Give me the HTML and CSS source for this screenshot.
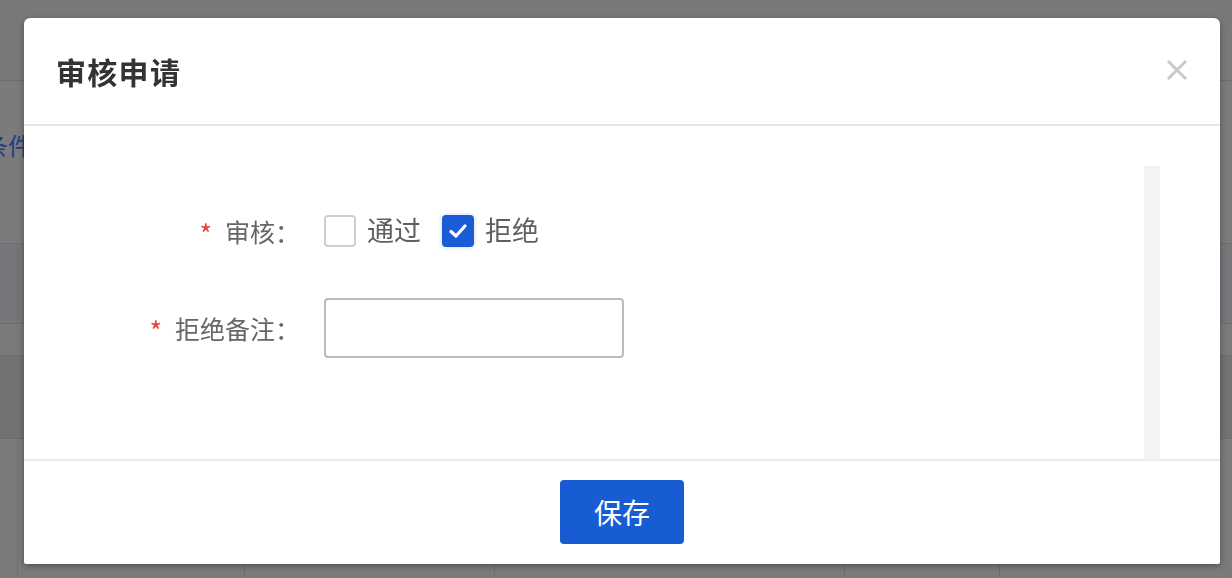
FILE: index.html
```html
<!DOCTYPE html>
<html lang="zh-CN">
<head>
<meta charset="utf-8">
<title>审核申请</title>
<link rel="stylesheet" href="styles.css">
</head>
<body>
<div class="page">
  <div class="topbar"></div>
  <div class="filter"><span class="filter-link">条件</span></div>
  <div class="table">
    <div class="trow r1"><div class="cell w18"></div><div class="cell"></div></div>
    <div class="trow r2"></div>
    <div class="trow r3"></div>
    <div class="trow r4">
      <div class="cell w18"></div>
      <div class="cell w227"></div>
      <div class="cell w250"></div>
      <div class="cell w350"></div>
      <div class="cell w155"></div>
      <div class="cell"></div>
    </div>
  </div>
</div>

<div class="dialog">
  <div class="dlg-header">
    <h2 class="dlg-title">审核申请</h2>
    <button class="dlg-close" aria-label="关闭">
      <svg width="22" height="22" viewBox="0 0 22 22"><path d="M2 2 L20 20 M20 2 L2 20" stroke="#c9c9c9" stroke-width="3" fill="none"/></svg>
    </button>
  </div>
  <div class="dlg-body">
    <div class="form">
      <div class="form-row row-audit">
        <label class="form-label"><span class="req">*</span>审核：</label>
        <div class="form-control">
          <label class="check"><span class="box"></span><span class="check-text">通过</span></label>
          <label class="check checked"><span class="box"><svg width="22" height="22" viewBox="0 0 22 22"><path d="M4 11.5 L9 16 L18 6" stroke="#fff" stroke-width="3.2" fill="none" stroke-linecap="round" stroke-linejoin="round"/></svg></span><span class="check-text">拒绝</span></label>
        </div>
      </div>
      <div class="form-row row-note">
        <label class="form-label"><span class="req">*</span>拒绝备注：</label>
        <div class="form-control">
          <input class="text-input" type="text">
        </div>
      </div>
    </div>
    <div class="scroll-track"></div>
  </div>
  <div class="dlg-footer">
    <button class="btn-primary">保存</button>
  </div>
</div>
</body>
</html>
```

FILE: styles.css
```css
* { box-sizing: border-box; }
html, body { margin: 0; padding: 0; }
body {
  width: 1232px;
  height: 578px;
  overflow: hidden;
  background: #7b7b7b;
  font-family: "Noto Sans CJK SC", "Noto Sans", sans-serif;
}

/* background page (dimmed) */
.page { width: 1232px; }
.topbar {
  height: 81px;
  background: #78797a;
  border-top: 18px solid #77787a;
  border-bottom: 1px solid #6d6d6e;
}
.filter {
  height: 162px;
  background: #7b7b7b;
  padding-top: 49px;
}
.filter-link {
  display: inline-block;
  margin-left: -16px;
  font-size: 24px;
  line-height: 30px;
  color: #1f3d88;
}
.trow {
  display: flex;
  border-top: 1px solid #6d6d6d;
}
.r1 { height: 80px; background: #76777a; }
.r2 { height: 32px; background: #7a7a7a; }
.r3 { height: 83px; background: #727272; }
.r4 { height: 140px; background: #7b7b7b; }
.cell { border-right: 1px solid #6e6e6e; flex: none; }
.cell:last-child { flex: 1; border-right: 0; }
.w18 { width: 18px; }
.w227 { width: 227px; }
.w250 { width: 250px; }
.w350 { width: 350px; }
.w155 { width: 155px; }

/* dialog */
.dialog {
  position: fixed;
  left: 24px;
  top: 18px;
  width: 1196px;
  height: 546px;
  background: #fff;
  border-radius: 6px 6px 2px 2px;
  box-shadow: 0 2px 6px rgba(0, 0, 0, 0.35);
  display: flex;
  flex-direction: column;
}
.dlg-header {
  height: 108px;
  flex: none;
  border-bottom: 2px solid #e6e6e6;
  display: flex;
  align-items: center;
  justify-content: space-between;
  padding: 0 32px 0 32px;
}
.dlg-title {
  margin: 0;
  font-size: 30px;
  font-weight: 700;
  letter-spacing: 1.3px;
  color: #333;
  line-height: 40px;
}
.dlg-close {
  border: 0;
  background: none;
  padding: 0;
  width: 22px;
  height: 22px;
  display: flex;
  margin-top: -2px;
}

.dlg-body {
  flex: 1;
  display: flex;
  padding-top: 40px;
  padding-right: 60px;
}
.form {
  flex: 1;
  padding-top: 35px;
}
.scroll-track {
  width: 16px;
  flex: none;
  background: #f3f3f3;
}
.form-row {
  display: flex;
  align-items: center;
  height: 60px;
}
.row-audit { margin-bottom: 37px; }
.form-label {
  width: 276px;
  flex: none;
  text-align: right;
  font-size: 25px;
  line-height: 32px;
  color: #666;
  margin-right: 24px;
  display: flex;
  justify-content: flex-end;
  align-items: center;
}
.req {
  color: #e8403a;
  margin-right: 13px;
  font-size: 27px;
  line-height: 32px;
  padding-top: 6px;
}
.form-control {
  display: flex;
  align-items: center;
}
.check {
  display: flex;
  align-items: center;
  margin-right: 21px;
  font-size: 27px;
  color: #5f5f5f;
}
.box {
  width: 32px;
  height: 32px;
  border: 2px solid #cfcfd2;
  border-radius: 4px;
  background: #fff;
  margin-right: 11px;
  display: flex;
  align-items: center;
  justify-content: center;
}
.checked .box {
  background: #1a5cd6;
  border-color: #1a5cd6;
  box-shadow: 0 0 5px rgba(26, 92, 214, 0.25);
}
.check-text { line-height: 32px; margin-top: -3px; }
.text-input {
  width: 300px;
  height: 60px;
  border: 2px solid #bcbcbc;
  border-radius: 4px;
  font-size: 24px;
  padding: 0 10px;
  outline: none;
}

.dlg-footer {
  height: 105px;
  flex: none;
  border-top: 2px solid #ececec;
  display: flex;
  justify-content: center;
  padding-top: 19px;
}
.btn-primary {
  width: 124px;
  height: 64px;
  border: 0;
  border-radius: 4px;
  background: #175cd3;
  color: #fff;
  font-family: "Noto Sans CJK SC", sans-serif;
  font-size: 28px;
  line-height: 64px;
  padding: 0;
}
```
